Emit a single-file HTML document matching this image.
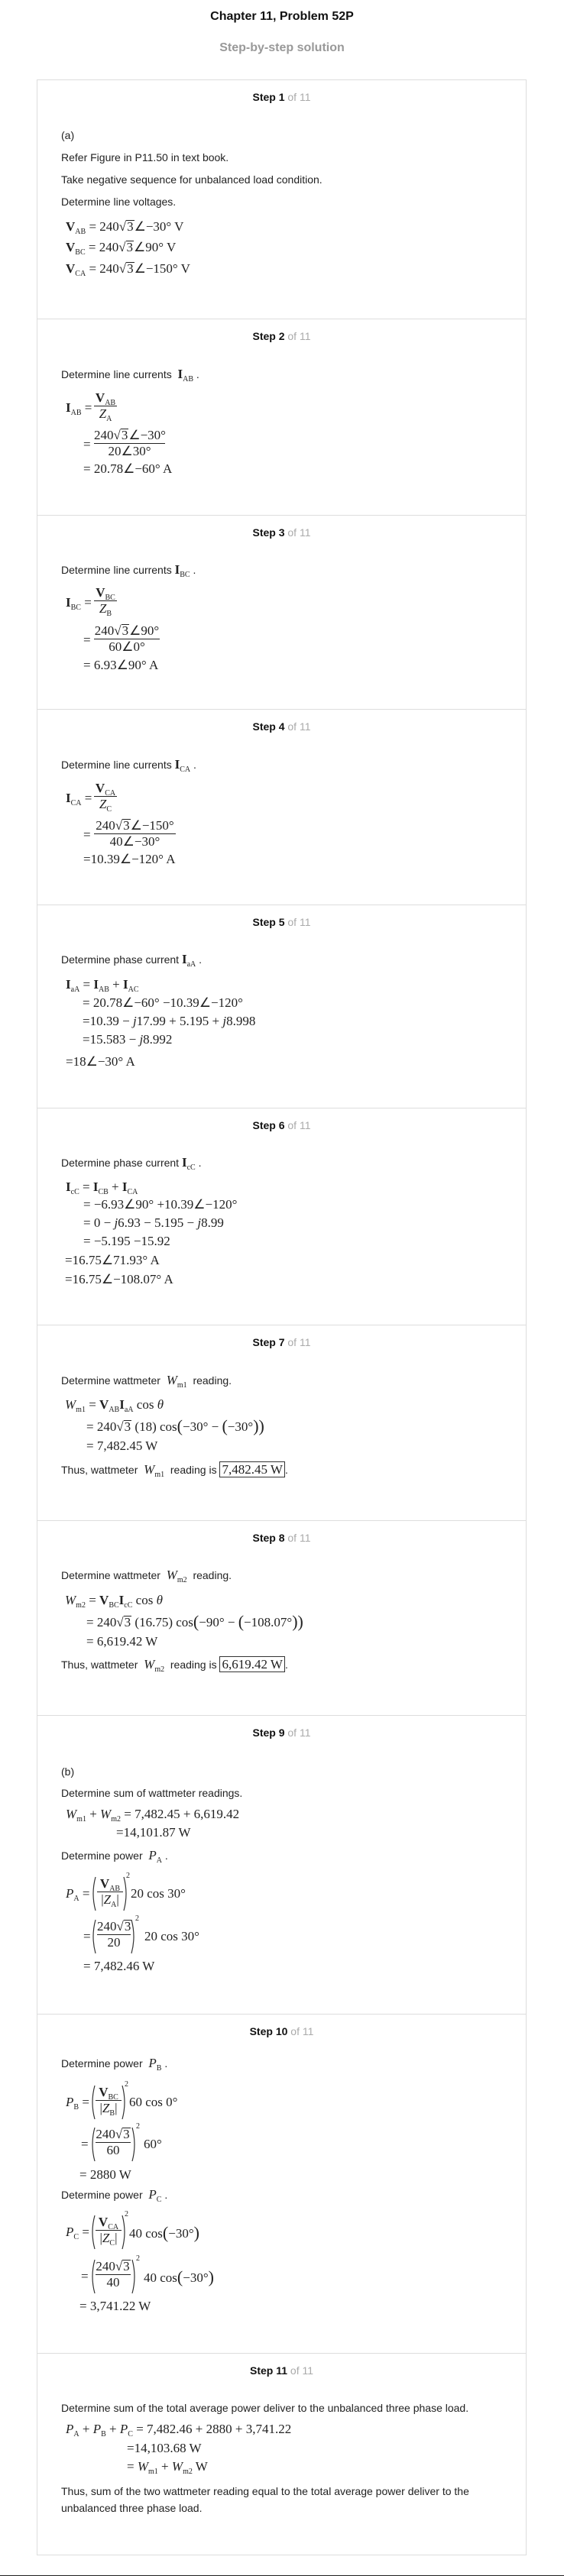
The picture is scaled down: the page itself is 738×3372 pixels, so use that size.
<!DOCTYPE html>
<html><head><meta charset="utf-8">
<style>
*{margin:0;padding:0;box-sizing:border-box}
body{width:738px;height:3372px;background:#fff;position:relative;overflow:hidden;font-family:"Liberation Sans",Arial,sans-serif;color:#222}
.h1{position:absolute;left:0;width:738px;text-align:center;top:12px;line-height:20px;font-weight:bold;font-size:16px;color:#111}
.h2{position:absolute;left:0;width:738px;text-align:center;top:53px;line-height:20px;font-weight:bold;font-size:16px;color:#999}
.box{position:absolute;left:48px;top:104px;width:641px;height:3241px;border:1px solid #ddd}
.s{position:absolute;left:0;width:639px;border-top:1px solid #ddd}
.s.first{border-top:none}
.lab{position:absolute;left:0;width:100%;top:12px;line-height:20px;text-align:center;font-weight:bold;font-size:14px;color:#111}
.lab span{font-weight:normal;color:#aaa}
.t{position:absolute;left:31px;font-size:14px;line-height:20px;white-space:nowrap;color:#222}
.m{position:absolute;font-family:"Liberation Serif","Times New Roman",serif;font-size:17px;line-height:20px;white-space:nowrap;color:#222}
.b{font-weight:bold}
.i{font-style:italic}
.sb{font-size:10px;position:relative;top:4px;font-style:normal;font-weight:normal}
.sq{border-top:1px solid #222;padding:0 1px;line-height:16px;display:inline-block}
.fr{position:absolute;text-align:center;font-family:"Liberation Serif","Times New Roman",serif;font-size:17px;white-space:nowrap}
.fr .n{line-height:21px;height:22px;border-bottom:1px solid #222}
.fr .d{line-height:20px}
.pp{position:absolute}
.bx{border:1px solid #333;padding:0 2px}
.big{font-size:22px;position:relative;top:1px}
</style></head><body>
<div class="h1">Chapter 11, Problem 52P</div>
<div class="h2">Step-by-step solution</div>
<div class="box">

<div class="s first" style="top:0;height:312px">
<div class="lab">Step 1 <span>of 11</span></div>
<div class="t" style="top:62px">(a)</div>
<div class="t" style="top:91px">Refer Figure in P11.50 in text book.</div>
<div class="t" style="top:120px">Take negative sequence for unbalanced load condition.</div>
<div class="t" style="top:149px">Determine line voltages.</div>
<div class="m" style="left:37px;top:182px"><span class="b">V</span><span class="sb">AB</span> = 240√<span class="sq">3</span>∠−30° V</div>
<div class="m" style="left:37px;top:209px"><span class="b">V</span><span class="sb">BC</span> = 240√<span class="sq">3</span>∠90° V</div>
<div class="m" style="left:37px;top:237px"><span class="b">V</span><span class="sb">CA</span> = 240√<span class="sq">3</span>∠−150° V</div>
</div>

<div class="s" style="top:312px;height:257px">
<div class="lab">Step 2 <span>of 11</span></div>
<div class="t" style="top:62px">Determine line currents &nbsp;<span class="m" style="position:static" ><span class="b">I</span><span class="sb">AB</span></span> .</div>
<div class="m" style="left:37px;top:106px"><span class="b">I</span><span class="sb">AB</span> =</div>
<div class="fr" style="left:74px;top:92px;width:30px"><div class="n"><span class="b">V</span><span class="sb">AB</span></div><div class="d"><span class="i">Z</span><span class="sb">A</span></div></div>
<div class="m" style="left:60px;top:154px">=</div>
<div class="fr" style="left:74px;top:141px;width:93px"><div class="n">240√<span class="sq">3</span>∠−30°</div><div class="d">20∠30°</div></div>
<div class="m" style="left:60px;top:186px">= 20.78∠−60° A</div>
</div>

<div class="s" style="top:569px;height:254px">
<div class="lab">Step 3 <span>of 11</span></div>
<div class="t" style="top:61px">Determine line currents <span class="m" style="position:static"><span class="b">I</span><span class="sb">BC</span></span> .</div>
<div class="m" style="left:37px;top:104px"><span class="b">I</span><span class="sb">BC</span> =</div>
<div class="fr" style="left:74px;top:90px;width:30px"><div class="n"><span class="b">V</span><span class="sb">BC</span></div><div class="d"><span class="i">Z</span><span class="sb">B</span></div></div>
<div class="m" style="left:60px;top:153px">=</div>
<div class="fr" style="left:74px;top:140px;width:86px"><div class="n">240√<span class="sq">3</span>∠90°</div><div class="d">60∠0°</div></div>
<div class="m" style="left:60px;top:186px">= 6.93∠90° A</div>
</div>

<div class="s" style="top:823px;height:256px">
<div class="lab">Step 4 <span>of 11</span></div>
<div class="t" style="top:62px">Determine line currents <span class="m" style="position:static"><span class="b">I</span><span class="sb">CA</span></span> .</div>
<div class="m" style="left:37px;top:106px"><span class="b">I</span><span class="sb">CA</span> =</div>
<div class="fr" style="left:74px;top:92px;width:30px"><div class="n"><span class="b">V</span><span class="sb">CA</span></div><div class="d"><span class="i">Z</span><span class="sb">C</span></div></div>
<div class="m" style="left:60px;top:154px">=</div>
<div class="fr" style="left:74px;top:141px;width:107px"><div class="n">240√<span class="sq">3</span>∠−150°</div><div class="d">40∠−30°</div></div>
<div class="m" style="left:60px;top:186px">=10.39∠−120° A</div>
</div>

<div class="s" style="top:1079px;height:266px">
<div class="lab">Step 5 <span>of 11</span></div>
<div class="t" style="top:61px">Determine phase current <span class="m" style="position:static"><span class="b">I</span><span class="sb">aA</span></span> .</div>
<div class="m" style="left:37px;top:94px"><span class="b">I</span><span class="sb">aA</span> = <span class="b">I</span><span class="sb">AB</span> + <span class="b">I</span><span class="sb">AC</span></div>
<div class="m" style="left:59px;top:118px">= 20.78∠−60° −10.39∠−120°</div>
<div class="m" style="left:59px;top:142px">=10.39 − <span class="i">j</span>17.99 + 5.195 + <span class="i">j</span>8.998</div>
<div class="m" style="left:59px;top:166px">=15.583 − <span class="i">j</span>8.992</div>
<div class="m" style="left:37px;top:195px">=18∠−30° A</div>
</div>

<div class="s" style="top:1345px;height:284px">
<div class="lab">Step 6 <span>of 11</span></div>
<div class="t" style="top:61px">Determine phase current <span class="m" style="position:static"><span class="b">I</span><span class="sb">cC</span></span> .</div>
<div class="m" style="left:37px;top:93px"><span class="b">I</span><span class="sb">cC</span> = <span class="b">I</span><span class="sb">CB</span> + <span class="b">I</span><span class="sb">CA</span></div>
<div class="m" style="left:60px;top:116px">= −6.93∠90° +10.39∠−120°</div>
<div class="m" style="left:60px;top:140px">= 0 − <span class="i">j</span>6.93 − 5.195 − <span class="i">j</span>8.99</div>
<div class="m" style="left:60px;top:164px">= −5.195 −15.92</div>
<div class="m" style="left:36px;top:189px">=16.75∠71.93° A</div>
<div class="m" style="left:36px;top:214px">=16.75∠−108.07° A</div>
</div>

<div class="s" style="top:1629px;height:256px">
<div class="lab">Step 7 <span>of 11</span></div>
<div class="t" style="top:62px">Determine wattmeter &nbsp;<span class="m i" style="position:static">W<span class="sb">m1</span></span>&nbsp; reading.</div>
<div class="m" style="left:36px;top:94px"><span class="i">W</span><span class="sb">m1</span> = <span class="b">V</span><span class="sb">AB</span><span class="b">I</span><span class="sb">aA</span> cos <span class="i">θ</span></div>
<div class="m" style="left:64px;top:121px">= 240√<span class="sq">3</span> (18) cos<span class="big">(</span>−30° − <span class="big">(</span>−30°<span class="big">))</span></div>
<div class="m" style="left:64px;top:148px">= 7,482.45 W</div>
<div class="t" style="top:179px">Thus, wattmeter &nbsp;<span class="m i" style="position:static">W<span class="sb">m1</span></span>&nbsp; reading is <span class="m bx" style="position:static">7,482.45 W</span>.</div>
</div>

<div class="s" style="top:1885px;height:255px">
<div class="lab">Step 8 <span>of 11</span></div>
<div class="t" style="top:61px">Determine wattmeter &nbsp;<span class="m i" style="position:static">W<span class="sb">m2</span></span>&nbsp; reading.</div>
<div class="m" style="left:36px;top:94px"><span class="i">W</span><span class="sb">m2</span> = <span class="b">V</span><span class="sb">BC</span><span class="b">I</span><span class="sb">cC</span> cos <span class="i">θ</span></div>
<div class="m" style="left:64px;top:121px">= 240√<span class="sq">3</span> (16.75) cos<span class="big">(</span>−90° − <span class="big">(</span>−108.07°<span class="big">))</span></div>
<div class="m" style="left:64px;top:148px">= 6,619.42 W</div>
<div class="t" style="top:178px">Thus, wattmeter &nbsp;<span class="m i" style="position:static">W<span class="sb">m2</span></span>&nbsp; reading is <span class="m bx" style="position:static">6,619.42 W</span>.</div>
</div>

<div class="s" style="top:2140px;height:391px">
<div class="lab">Step 9 <span>of 11</span></div>
<div class="t" style="top:63px">(b)</div>
<div class="t" style="top:91px">Determine sum of wattmeter readings.</div>
<div class="m" style="left:37px;top:119px"><span class="i">W</span><span class="sb">m1</span> + <span class="i">W</span><span class="sb">m2</span> = 7,482.45 + 6,619.42</div>
<div class="m" style="left:103px;top:143px">=14,101.87 W</div>
<div class="t" style="top:173px">Determine power &nbsp;<span class="m i" style="position:static">P<span class="sb">A</span></span> .</div>
<div class="m" style="left:37px;top:223px"><span class="i">P</span><span class="sb">A</span> =</div>
<svg class="pp" style="left:70px;top:210px" width="7" height="46"><path d="M6 1 Q0 23 6 45" stroke="#333" fill="none" stroke-width="1.2"/></svg>
<div class="fr" style="left:78px;top:209px;width:34px"><div class="n"><span class="b">V</span><span class="sb">AB</span></div><div class="d">|<span class="i">Z</span><span class="sb">A</span>|</div></div>
<svg class="pp" style="left:112px;top:210px" width="7" height="46"><path d="M1 1 Q7 23 1 45" stroke="#333" fill="none" stroke-width="1.2"/></svg>
<div class="m" style="left:116px;top:200px;font-size:10px">2</div>
<div class="m" style="left:122px;top:223px">20 cos 30°</div>
<div class="m" style="left:60px;top:279px">=</div>
<svg class="pp" style="left:70px;top:266px" width="7" height="46"><path d="M6 1 Q0 23 6 45" stroke="#333" fill="none" stroke-width="1.2"/></svg>
<div class="fr" style="left:78px;top:265px;width:44px"><div class="n">240√<span class="sq">3</span></div><div class="d">20</div></div>
<svg class="pp" style="left:122px;top:266px" width="7" height="46"><path d="M1 1 Q7 23 1 45" stroke="#333" fill="none" stroke-width="1.2"/></svg>
<div class="m" style="left:128px;top:256px;font-size:10px">2</div>
<div class="m" style="left:140px;top:279px">20 cos 30°</div>
<div class="m" style="left:60px;top:318px">= 7,482.46 W</div>
</div>

<div class="s" style="top:2531px;height:444px">
<div class="lab">Step 10 <span>of 11</span></div>
<div class="t" style="top:54px">Determine power &nbsp;<span class="m i" style="position:static">P<span class="sb">B</span></span> .</div>
<div class="m" style="left:37px;top:105px"><span class="i">P</span><span class="sb">B</span> =</div>
<svg class="pp" style="left:69px;top:92px" width="7" height="46"><path d="M6 1 Q0 23 6 45" stroke="#333" fill="none" stroke-width="1.2"/></svg>
<div class="fr" style="left:76px;top:91px;width:34px"><div class="n"><span class="b">V</span><span class="sb">BC</span></div><div class="d">|<span class="i">Z</span><span class="sb">B</span>|</div></div>
<svg class="pp" style="left:110px;top:92px" width="7" height="46"><path d="M1 1 Q7 23 1 45" stroke="#333" fill="none" stroke-width="1.2"/></svg>
<div class="m" style="left:114px;top:82px;font-size:10px">2</div>
<div class="m" style="left:120px;top:105px">60 cos 0°</div>
<div class="m" style="left:57px;top:160px">=</div>
<svg class="pp" style="left:69px;top:147px" width="7" height="46"><path d="M6 1 Q0 23 6 45" stroke="#333" fill="none" stroke-width="1.2"/></svg>
<div class="fr" style="left:76px;top:146px;width:46px"><div class="n">240√<span class="sq">3</span></div><div class="d">60</div></div>
<svg class="pp" style="left:123px;top:147px" width="7" height="46"><path d="M1 1 Q7 23 1 45" stroke="#333" fill="none" stroke-width="1.2"/></svg>
<div class="m" style="left:129px;top:137px;font-size:10px">2</div>
<div class="m" style="left:139px;top:160px">60°</div>
<div class="m" style="left:55px;top:200px">= 2880 W</div>
<div class="t" style="top:226px">Determine power &nbsp;<span class="m i" style="position:static">P<span class="sb">C</span></span> .</div>
<div class="m" style="left:37px;top:275px"><span class="i">P</span><span class="sb">C</span> =</div>
<svg class="pp" style="left:69px;top:262px" width="7" height="46"><path d="M6 1 Q0 23 6 45" stroke="#333" fill="none" stroke-width="1.2"/></svg>
<div class="fr" style="left:76px;top:261px;width:34px"><div class="n"><span class="b">V</span><span class="sb">CA</span></div><div class="d">|<span class="i">Z</span><span class="sb">C</span>|</div></div>
<svg class="pp" style="left:110px;top:262px" width="7" height="46"><path d="M1 1 Q7 23 1 45" stroke="#333" fill="none" stroke-width="1.2"/></svg>
<div class="m" style="left:114px;top:252px;font-size:10px">2</div>
<div class="m" style="left:120px;top:275px">40 cos<span class="big">(</span>−30°<span class="big">)</span></div>
<div class="m" style="left:57px;top:333px">=</div>
<svg class="pp" style="left:69px;top:320px" width="7" height="46"><path d="M6 1 Q0 23 6 45" stroke="#333" fill="none" stroke-width="1.2"/></svg>
<div class="fr" style="left:76px;top:319px;width:46px"><div class="n">240√<span class="sq">3</span></div><div class="d">40</div></div>
<svg class="pp" style="left:123px;top:320px" width="7" height="46"><path d="M1 1 Q7 23 1 45" stroke="#333" fill="none" stroke-width="1.2"/></svg>
<div class="m" style="left:129px;top:310px;font-size:10px">2</div>
<div class="m" style="left:139px;top:333px">40 cos<span class="big">(</span>−30°<span class="big">)</span></div>
<div class="m" style="left:55px;top:372px">= 3,741.22 W</div>
</div>

<div class="s" style="top:2975px;height:264px">
<div class="lab">Step 11 <span>of 11</span></div>
<div class="t" style="top:61px">Determine sum of the total average power deliver to the unbalanced three phase load.</div>
<div class="m" style="left:37px;top:89px"><span class="i">P</span><span class="sb">A</span> + <span class="i">P</span><span class="sb">B</span> + <span class="i">P</span><span class="sb">C</span> = 7,482.46 + 2880 + 3,741.22</div>
<div class="m" style="left:117px;top:114px">=14,103.68 W</div>
<div class="m" style="left:117px;top:138px">= <span class="i">W</span><span class="sb">m1</span> + <span class="i">W</span><span class="sb">m2</span> W</div>
<div class="t" style="top:170px">Thus, sum of the two wattmeter reading equal to the total average power deliver to the</div>
<div class="t" style="top:192px">unbalanced three phase load.</div>
</div>

</div>
<div style="position:absolute;left:0;top:3371px;width:738px;height:1px;background:#222"></div>
</body></html>
